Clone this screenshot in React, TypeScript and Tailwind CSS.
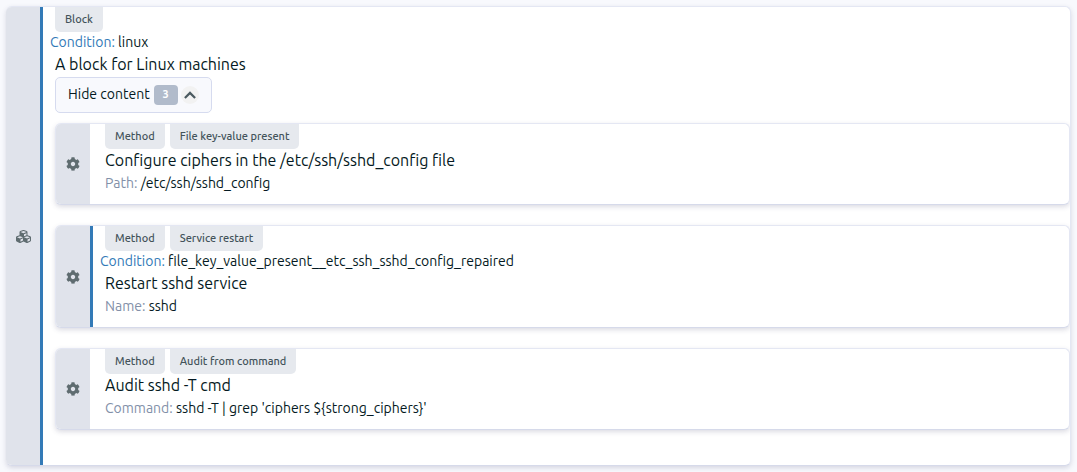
import { useState, type ReactNode } from "react";
import { FaCog, FaCubes } from "react-icons/fa";

type Method = {
  kind: string;
  condition?: string;
  title: string;
  param: string;
  value: string;
};

const methods: Method[] = [
  {
    kind: "File key-value present",
    title: "Configure ciphers in the /etc/ssh/sshd_config file",
    param: "Path",
    value: "/etc/ssh/sshd_config",
  },
  {
    kind: "Service restart",
    condition: "file_key_value_present__etc_ssh_sshd_config_repaired",
    title: "Restart sshd service",
    param: "Name",
    value: "sshd",
  },
  {
    kind: "Audit from command",
    title: "Audit sshd -T cmd",
    param: "Command",
    value: "sshd -T | grep 'ciphers ${strong_ciphers}'",
  },
];

function Tag({ children }: { children: ReactNode }) {
  return (
    <span className="rounded-b-[5px] bg-[#e6e9ee] px-[10px] text-[11px] leading-[25px] font-medium text-[#43535a]">
      {children}
    </span>
  );
}

function Condition({ children }: { children: ReactNode }) {
  return (
    <p className="-ml-[5px] text-[14px] leading-5">
      <span className="text-[#337ab7]">Condition:</span> {children}
    </p>
  );
}

function MethodCard({ method }: { method: Method }) {
  return (
    <li className="flex overflow-hidden rounded-md border border-[#e4e7f3] border-b-[#d6daea] bg-white shadow-[0_2px_5px_rgba(60,60,100,0.18)]">
      <div className="flex w-[34px] shrink-0 items-center justify-center bg-[#e0e3eb] text-[#5f6c70]">
        <FaCog size={14} aria-hidden="true" />
      </div>
      <div
        className={
          method.condition
            ? "min-w-0 flex-1 border-l-[3px] border-[#337ab7] pb-[10px] pl-3"
            : "min-w-0 flex-1 pb-[10px] pl-[15px]"
        }
      >
        <div className="flex gap-[5px]">
          <Tag>Method</Tag>
          <Tag>{method.kind}</Tag>
        </div>
        <div className="flex flex-col gap-px">
          {method.condition && <Condition>{method.condition}</Condition>}
          <h3 className="text-[16px] leading-[22px]">{method.title}</h3>
          <p className="text-[14px] leading-[22px]">
            <span className="text-[#8290a8]">{method.param}:</span> {method.value}
          </p>
        </div>
      </div>
    </li>
  );
}

export default function App() {
  const [open, setOpen] = useState(true);
  return (
    <main className="min-h-screen bg-[#f8f9fd] px-[6px] pt-[6px] pb-[6px] font-['Ubuntu','Noto_Sans',sans-serif] font-normal text-[#041922]">
      <section className="flex overflow-hidden rounded-md border border-l-0 border-[#e4e7f3] border-b-[#d6daea] bg-white shadow-[0_2px_5px_rgba(60,60,100,0.18)]">
        <div className="flex w-[34px] shrink-0 items-center justify-center bg-[#e0e3eb] text-[#5f6c70]">
          <FaCubes size={15} aria-hidden="true" />
        </div>
        <div className="min-w-0 flex-1 border-l-[3px] border-[#337ab7] pb-[35px] pl-3">
          <div className="flex">
            <Tag>Block</Tag>
          </div>
          <div className="flex flex-col gap-px">
            <Condition>linux</Condition>
            <h2 className="text-[16px] leading-[22px]">A block for Linux machines</h2>
          </div>
          <button
            type="button"
            aria-expanded={open}
            onClick={() => setOpen(!open)}
            className="mt-[2px] flex h-9 items-center rounded-[5px] border border-[#d6dbef] bg-[#f8f9fd] px-3 text-[14px]"
          >
            <span className="pb-[2px] leading-5">{open ? "Hide content" : "Show content"}</span>
            <span className="ml-1 flex h-5 w-6 items-center justify-center rounded bg-[#b1bbcb] pb-[2px] text-[11px] font-bold text-white">
              {methods.length}
            </span>
            <span className="ml-[3px] flex size-[18px] items-center justify-center rounded-full bg-[#f2f2f2]">
              <svg
                viewBox="0 0 12 8"
                className={open ? "h-2 w-3" : "h-2 w-3 rotate-180"}
                fill="none"
                stroke="#4b5a60"
                strokeWidth="2.2"
                aria-hidden="true"
              >
                <path d="M0.9 7 L6 1.9 L11.1 7" />
              </svg>
            </span>
          </button>
          {open && (
            <ul className="mt-[10px] flex flex-col gap-5">
              {methods.map((m) => (
                <MethodCard key={m.title} method={m} />
              ))}
            </ul>
          )}
        </div>
      </section>
    </main>
  );
}
